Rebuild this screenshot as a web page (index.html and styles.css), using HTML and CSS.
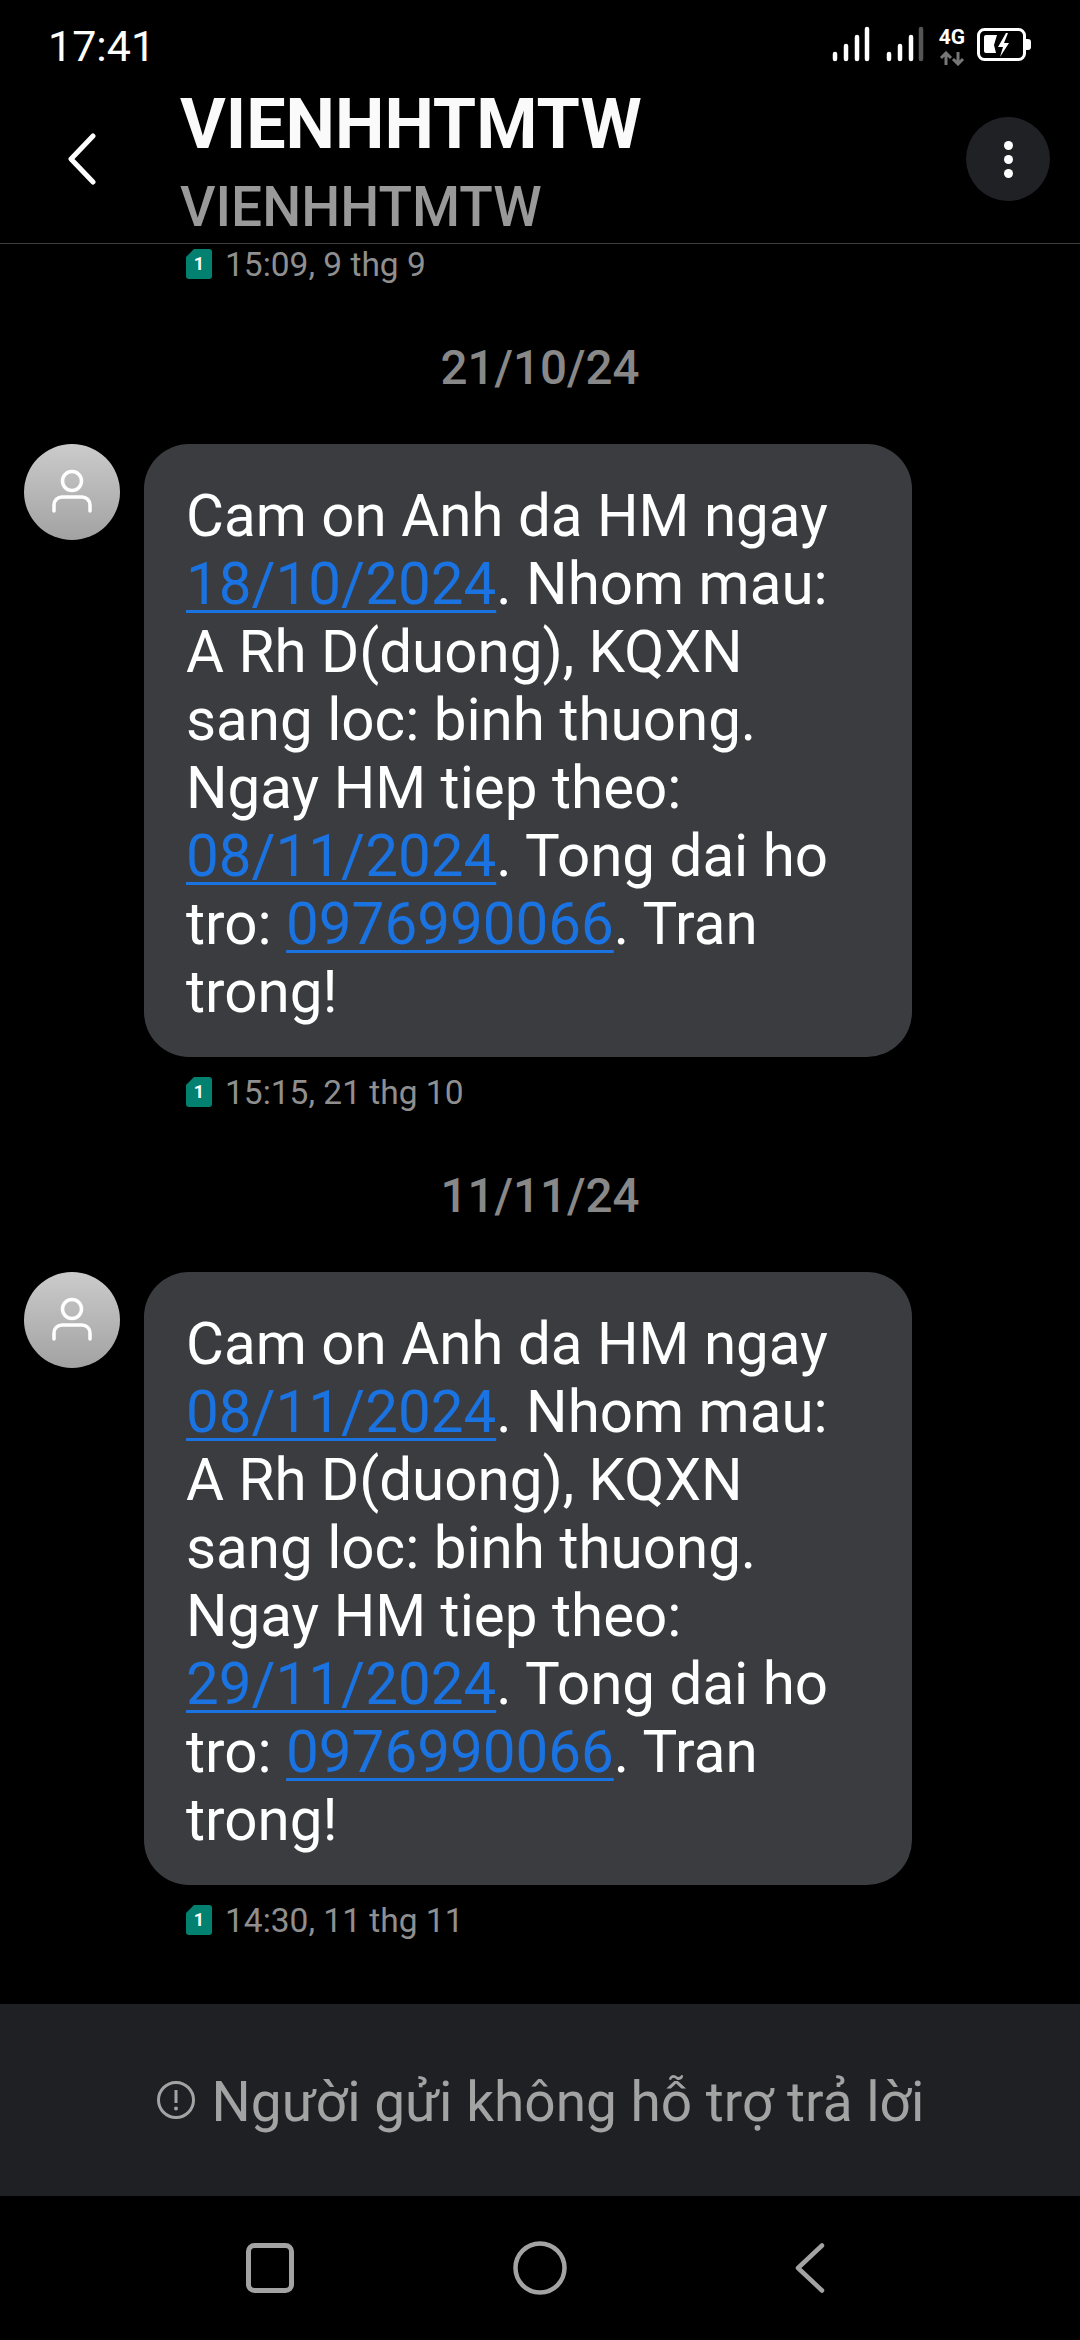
FILE: index.html
```html
<!DOCTYPE html>
<html lang="vi">
<head>
    <meta charset="UTF-8">
    <title>VIENHHTMTW</title>
    <link rel="stylesheet" href="styles.css">
</head>
<body>
    <div class="screen">
        <div class="status-bar">
            <span class="clock">17:41</span>
            <div class="status-icons">
                <svg class="signal" width="92" height="36" viewBox="0 0 92 36">
                    <g stroke="#fff" stroke-width="4.5" stroke-linecap="round">
                        <line x1="3" y1="28" x2="3" y2="33"/>
                        <line x1="14" y1="20" x2="14" y2="33"/>
                        <line x1="25" y1="11" x2="25" y2="33"/>
                        <line x1="35" y1="3" x2="35" y2="33"/>
                        <line x1="57" y1="28" x2="57" y2="33"/>
                        <line x1="68" y1="20" x2="68" y2="33"/>
                        <line x1="79" y1="11" x2="79" y2="33"/>
                        <line x1="89" y1="3" x2="89" y2="33" stroke="#555"/>
                    </g>
                </svg>
                <div class="network">
                    <span class="network-label">4G</span>
                    <svg width="26" height="15" viewBox="0 0 26 15">
                        <path d="M7 14V3M2 7l5-5 5 5" fill="none" stroke="#777" stroke-width="3"/>
                        <path d="M19 1v11M14 8l5 5 5-5" fill="none" stroke="#777" stroke-width="3"/>
                    </svg>
                </div>
                <svg class="battery" width="54" height="34" viewBox="0 0 54 34">
                    <rect x="1.5" y="1.5" width="46" height="30" rx="6" fill="none" stroke="#fff" stroke-width="3"/>
                    <path d="M49 11h2a3 3 0 0 1 3 3v5a3 3 0 0 1-3 3h-2z" fill="#fff"/>
                    <path d="M7 9a2 2 0 0 1 2-2h11l-3 10 2 8H9a2 2 0 0 1-2-2z" fill="#fff"/>
                    <path d="M29 5l-8 14h5l-3 10 9-14h-5l4-10z" fill="#fff"/>
                </svg>
            </div>
        </div>

        <header class="top-bar">
            <svg class="back" width="30" height="52" viewBox="0 0 30 52">
                <path d="M26 3L4 26l22 23" fill="none" stroke="#fff" stroke-width="5" stroke-linecap="round" stroke-linejoin="round"/>
            </svg>
            <div class="titles">
                <div class="title">VIENHHTMTW</div>
                <div class="subtitle">VIENHHTMTW</div>
            </div>
            <div class="menu-btn"><span></span><span></span><span></span></div>
        </header>

        <main class="thread">
            <div class="meta meta-first">
                <span class="sim">1</span>
                <span>15:09, 9 thg 9</span>
            </div>

            <div class="date">21/10/24</div>
            <div class="message">
                <div class="avatar">
                    <svg width="96" height="96" viewBox="0 0 96 96">
                        <circle cx="48" cy="37" r="9.5" fill="none" stroke="#fff" stroke-width="3.5"/>
                        <path d="M30 67v-6a8 8 0 0 1 8-8h20a8 8 0 0 1 8 8v6" fill="none" stroke="#fff" stroke-width="3.5" stroke-linecap="round"/>
                    </svg>
                </div>
                <div class="bubble">Cam on Anh da HM ngay <a>18/10/2024</a>. Nhom mau: A Rh D(duong), KQXN sang loc: binh thuong. Ngay HM tiep theo: <a>08/11/2024</a>. Tong dai ho tro: <a>0976990066</a>. Tran trong!</div>
            </div>
            <div class="meta">
                <span class="sim">1</span>
                <span>15:15, 21 thg 10</span>
            </div>

            <div class="date">11/11/24</div>
            <div class="message">
                <div class="avatar">
                    <svg width="96" height="96" viewBox="0 0 96 96">
                        <circle cx="48" cy="37" r="9.5" fill="none" stroke="#fff" stroke-width="3.5"/>
                        <path d="M30 67v-6a8 8 0 0 1 8-8h20a8 8 0 0 1 8 8v6" fill="none" stroke="#fff" stroke-width="3.5" stroke-linecap="round"/>
                    </svg>
                </div>
                <div class="bubble">Cam on Anh da HM ngay <a>08/11/2024</a>. Nhom mau: A Rh D(duong), KQXN sang loc: binh thuong. Ngay HM tiep theo: <a>29/11/2024</a>. Tong dai ho tro: <a>0976990066</a>. Tran trong!</div>
            </div>
            <div class="meta">
                <span class="sim">1</span>
                <span>14:30, 11 thg 11</span>
            </div>
        </main>

        <div class="no-reply">
            <svg width="40" height="40" viewBox="0 0 40 40">
                <circle cx="20" cy="20" r="17.5" fill="none" stroke="#a3a3a3" stroke-width="3"/>
                <path d="M20 10v13" stroke="#a3a3a3" stroke-width="3"/>
                <circle cx="20" cy="28.5" r="2" fill="#a3a3a3"/>
            </svg>
            <span>Người gửi không hỗ trợ trả lời</span>
        </div>

        <nav class="nav-bar">
            <svg width="48" height="50" viewBox="0 0 48 50">
                <rect x="2.5" y="2.5" width="43" height="45" rx="6" fill="none" stroke="#a3a3a3" stroke-width="5"/>
            </svg>
            <svg width="54" height="54" viewBox="0 0 54 54">
                <circle cx="27" cy="27" r="24.5" fill="none" stroke="#a3a3a3" stroke-width="4.5"/>
            </svg>
            <svg width="30" height="50" viewBox="0 0 30 50">
                <path d="M27 2.5L3 25l24 22.5" fill="none" stroke="#a3a3a3" stroke-width="4.5" stroke-linecap="round" stroke-linejoin="round"/>
            </svg>
        </nav>
    </div>
</body>
</html>
```

FILE: styles.css
```css
body {
    margin: 0;
    background-color: #000;
    font-family: Roboto, "Noto Sans", sans-serif;
    color: #fff;
}
.screen {
    width: 1080px;
    height: 2340px;
    display: flex;
    flex-direction: column;
    overflow: hidden;
}
.status-bar {
    height: 86px;
    flex: none;
    display: flex;
    justify-content: space-between;
    align-items: flex-start;
    padding: 21px 49px 0 48px;
    box-sizing: border-box;
}
.clock {
    font-size: 43px;
    line-height: 50px;
}
.status-icons {
    display: flex;
    align-items: flex-start;
    padding-top: 5px;
}
.signal {
    margin-right: 13px;
}
.network {
    width: 30px;
    display: flex;
    flex-direction: column;
    align-items: center;
    margin-right: 10px;
}
.network-label {
    font-size: 21px;
    line-height: 22px;
    font-weight: 700;
}
.network svg {
    margin-top: 3px;
}
.battery {
    margin-top: 2px;
}
.top-bar {
    height: 158px;
    flex: none;
    display: flex;
    align-items: flex-start;
    padding-left: 67px;
    padding-right: 30px;
    border-bottom: 1px solid #3c3c3c;
    box-sizing: border-box;
}
.back {
    margin-top: 47px;
    margin-right: 83px;
}
.titles {
    flex: 1;
}
.title {
    font-size: 70px;
    line-height: 76px;
    font-weight: 700;
    color: #fafafa;
}
.subtitle {
    margin-top: 14px;
    font-size: 55px;
    line-height: 62px;
    font-weight: 500;
    color: #999;
}
.menu-btn {
    width: 84px;
    height: 84px;
    margin-top: 31px;
    border-radius: 50%;
    background-color: #202125;
    display: flex;
    flex-direction: column;
    justify-content: center;
    align-items: center;
    gap: 5px;
}
.menu-btn span {
    width: 9px;
    height: 9px;
    border-radius: 50%;
    background-color: #fff;
}
.thread {
    flex: 1;
    min-height: 0;
}
.meta {
    display: flex;
    align-items: center;
    gap: 13px;
    height: 30px;
    margin-top: 20px;
    padding-left: 186px;
    font-size: 33.5px;
    color: #8f8f8f;
}
.meta-first {
    margin-top: 5px;
}
.sim {
    width: 26px;
    height: 30px;
    border-radius: 3px;
    background-color: #028070;
    color: #fff;
    font-size: 18px;
    font-weight: 700;
    line-height: 30px;
    text-align: center;
    clip-path: polygon(8px 0, 100% 0, 100% 100%, 0 100%, 0 8px);
}
.date {
    margin-top: 66px;
    margin-bottom: 53px;
    height: 46px;
    line-height: 46px;
    text-align: center;
    font-size: 47.5px;
    font-weight: 500;
    color: #888;
}
.message {
    display: flex;
    align-items: flex-start;
    gap: 24px;
    padding-left: 24px;
}
.avatar {
    width: 96px;
    height: 96px;
    flex: none;
    border-radius: 50%;
    background: linear-gradient(#cbcbcb, #a2a2a2);
}
.avatar svg {
    display: block;
}
.bubble {
    width: 768px;
    box-sizing: border-box;
    padding: 38px 62px 31px 42px;
    border-radius: 45px;
    background-color: #3b3c40;
    font-size: 58.3px;
    line-height: 68px;
    color: #fff;
}
.bubble a {
    color: #1a73e0;
    text-decoration: underline;
    text-decoration-thickness: 3px;
    text-underline-offset: 6px;
}
.no-reply {
    height: 192px;
    flex: none;
    display: flex;
    justify-content: center;
    align-items: center;
    gap: 16px;
    background-color: #1f2024;
    font-size: 55px;
    color: #a3a3a3;
}
.no-reply span {
    position: relative;
    top: 2px;
}
.nav-bar {
    height: 144px;
    flex: none;
    display: grid;
    grid-template-columns: repeat(3, 270px);
    justify-items: center;
    align-items: center;
    padding-left: 135px;
}
```
